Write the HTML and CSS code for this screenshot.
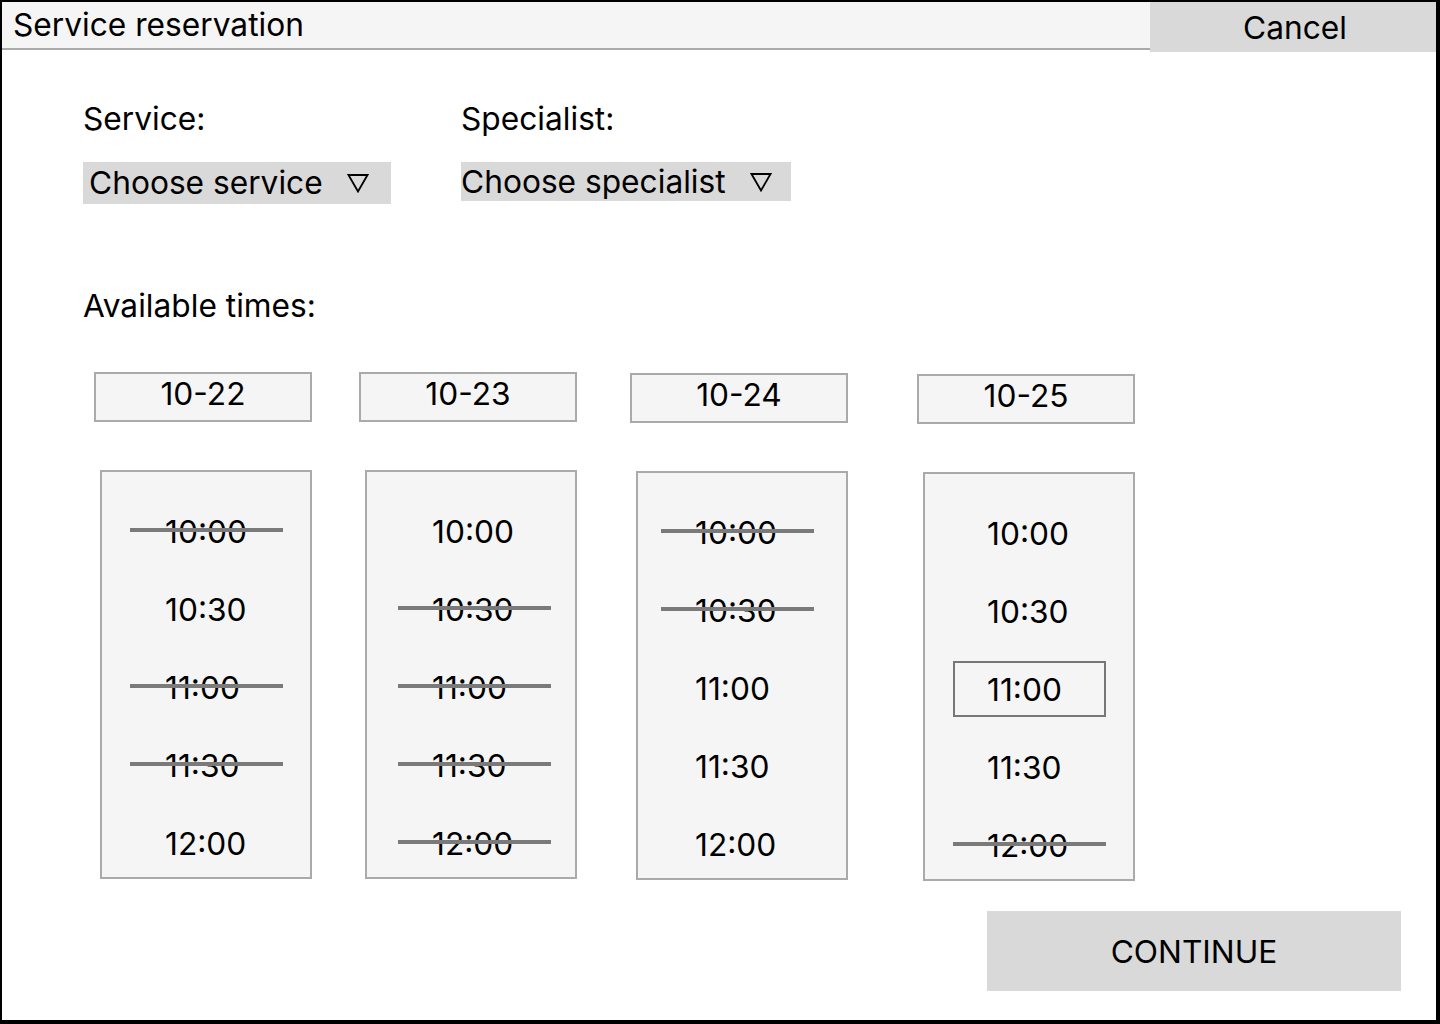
FILE: index.html
```html
<!DOCTYPE html>
<html lang="en">
<head>
    <meta charset="UTF-8">
    <meta name="viewport" content="width=device-width, initial-scale=1.0">
    <title>Service reservation</title>
    <link rel="stylesheet" href="styles.css">
</head>
<body>
    <div class="frame">
        <header class="topbar">
            <div class="title">Service reservation</div>
            <button class="cancel">Cancel</button>
        </header>

        <main class="content">
            <div class="pickers">
                <div class="picker">
                    <div class="label">Service:</div>
                    <div class="select select-service">
                        <span>Choose service</span>
                        <svg class="caret" width="22" height="20" viewBox="0 0 22 20"><path d="M1.5 2 H20.5 L11 18.5 Z" fill="none" stroke="#000" stroke-width="1.8" stroke-linejoin="miter"/></svg>
                    </div>
                </div>
                <div class="picker">
                    <div class="label">Specialist:</div>
                    <div class="select select-specialist">
                        <span>Choose specialist</span>
                        <svg class="caret" width="22" height="20" viewBox="0 0 22 20"><path d="M1.5 2 H20.5 L11 18.5 Z" fill="none" stroke="#000" stroke-width="1.8" stroke-linejoin="miter"/></svg>
                    </div>
                </div>
            </div>

            <div class="label times-label">Available times:</div>

            <div class="days">
                <div class="day day-first">
                    <div class="date">10-22</div>
                    <ul class="slots">
                        <li class="slot taken">10:00</li>
                        <li class="slot">10:30</li>
                        <li class="slot taken">11:00</li>
                        <li class="slot taken">11:30</li>
                        <li class="slot">12:00</li>
                    </ul>
                </div>
                <div class="day day-second">
                    <div class="date">10-23</div>
                    <ul class="slots">
                        <li class="slot">10:00</li>
                        <li class="slot taken">10:30</li>
                        <li class="slot taken">11:00</li>
                        <li class="slot taken">11:30</li>
                        <li class="slot taken">12:00</li>
                    </ul>
                </div>
                <div class="day day-third">
                    <div class="date">10-24</div>
                    <ul class="slots">
                        <li class="slot taken">10:00</li>
                        <li class="slot taken">10:30</li>
                        <li class="slot">11:00</li>
                        <li class="slot">11:30</li>
                        <li class="slot">12:00</li>
                    </ul>
                </div>
                <div class="day day-fourth">
                    <div class="date">10-25</div>
                    <ul class="slots">
                        <li class="slot">10:00</li>
                        <li class="slot">10:30</li>
                        <li class="slot selected">11:00</li>
                        <li class="slot">11:30</li>
                        <li class="slot taken">12:00</li>
                    </ul>
                </div>
            </div>

            <button class="continue">CONTINUE</button>
        </main>
    </div>
</body>
</html>
```

FILE: styles.css
```css
* {
    box-sizing: border-box;
}

body {
    margin: 0;
    font-family: 'Inter', 'Liberation Sans', sans-serif;
    font-size: 31.7px;
    color: #000;
    background: #fff;
}

.frame {
    width: 1440px;
    height: 1024px;
    border: 2px solid #000;
    border-right-width: 4px;
    border-bottom-width: 4px;
    display: flex;
    flex-direction: column;
}

/* Top bar */
.topbar {
    display: flex;
    align-items: flex-start;
    height: 50px;
}

.title {
    flex: 1;
    height: 48px;
    background: #f5f5f5;
    border-bottom: 2px solid #aaa;
    padding-left: 11px;
    line-height: 46px;
}

.cancel {
    width: 286px;
    height: 50px;
    border: none;
    background: #d9d9d9;
    font-family: inherit;
    font-size: inherit;
    color: #000;
    padding: 0 0 0 4px;
}

/* Main area */
.content {
    flex: 1;
    display: flex;
    flex-direction: column;
    padding: 0 35px 30px 81px;
}

.pickers {
    display: flex;
    gap: 70px;
    margin-top: 47px;
}

.label {
    line-height: 40px;
}

.select {
    display: flex;
    align-items: center;
    margin-top: 23px;
    background: #d9d9d9;
    line-height: 40px;
    gap: 24px;
}

.select-service {
    width: 308px;
    height: 42px;
    padding-left: 6px;
}

.select-specialist {
    width: 330px;
    height: 39px;
    padding-left: 0;
}

.caret {
    flex-shrink: 0;
}

.times-label {
    margin-top: 82px;
}

/* Days */
.days {
    display: flex;
    gap: 47px;
    margin-top: 46px;
    padding-left: 11px;
}

.day {
    width: 218px;
    display: flex;
    flex-direction: column;
    align-items: flex-end;
    --slot-offset: 28px;
    --text-indent: 34px;
}

.day-first {
    --text-indent: 35px;
}

.day-second {
    --slot-offset: 31px;
}

.day-third {
    margin-left: 6px;
    margin-top: 1px;
    --slot-offset: 23px;
}

.day-fourth {
    margin-left: 22px;
    margin-top: 2px;
}

.date {
    width: 218px;
    height: 50px;
    border: 2px solid #aaa;
    background: #f5f5f5;
    text-align: center;
    line-height: 39px;
}

.slots {
    list-style: none;
    margin: 48px 0 0;
    width: 212px;
    height: 409px;
    border: 2px solid #aaa;
    background: #f5f5f5;
    padding: 31px 0 0 var(--slot-offset);
    display: flex;
    flex-direction: column;
    gap: 22px;
}

.slot {
    position: relative;
    width: 153px;
    height: 56px;
    padding-left: var(--text-indent);
    line-height: 57px;
}

.slot.taken::after {
    content: '';
    position: absolute;
    left: 0;
    right: 0;
    top: 25px;
    height: 4px;
    background: #7a7a7a;
}

.slot.selected {
    border: 2px solid #777;
    padding-left: calc(var(--text-indent) - 2px);
    line-height: 53px;
}

/* Continue */
.continue {
    align-self: flex-end;
    margin-top: 30px;
    width: 414px;
    height: 80px;
    border: none;
    background: #d9d9d9;
    font-family: inherit;
    font-size: inherit;
    color: #000;
    padding: 0;
}
```
